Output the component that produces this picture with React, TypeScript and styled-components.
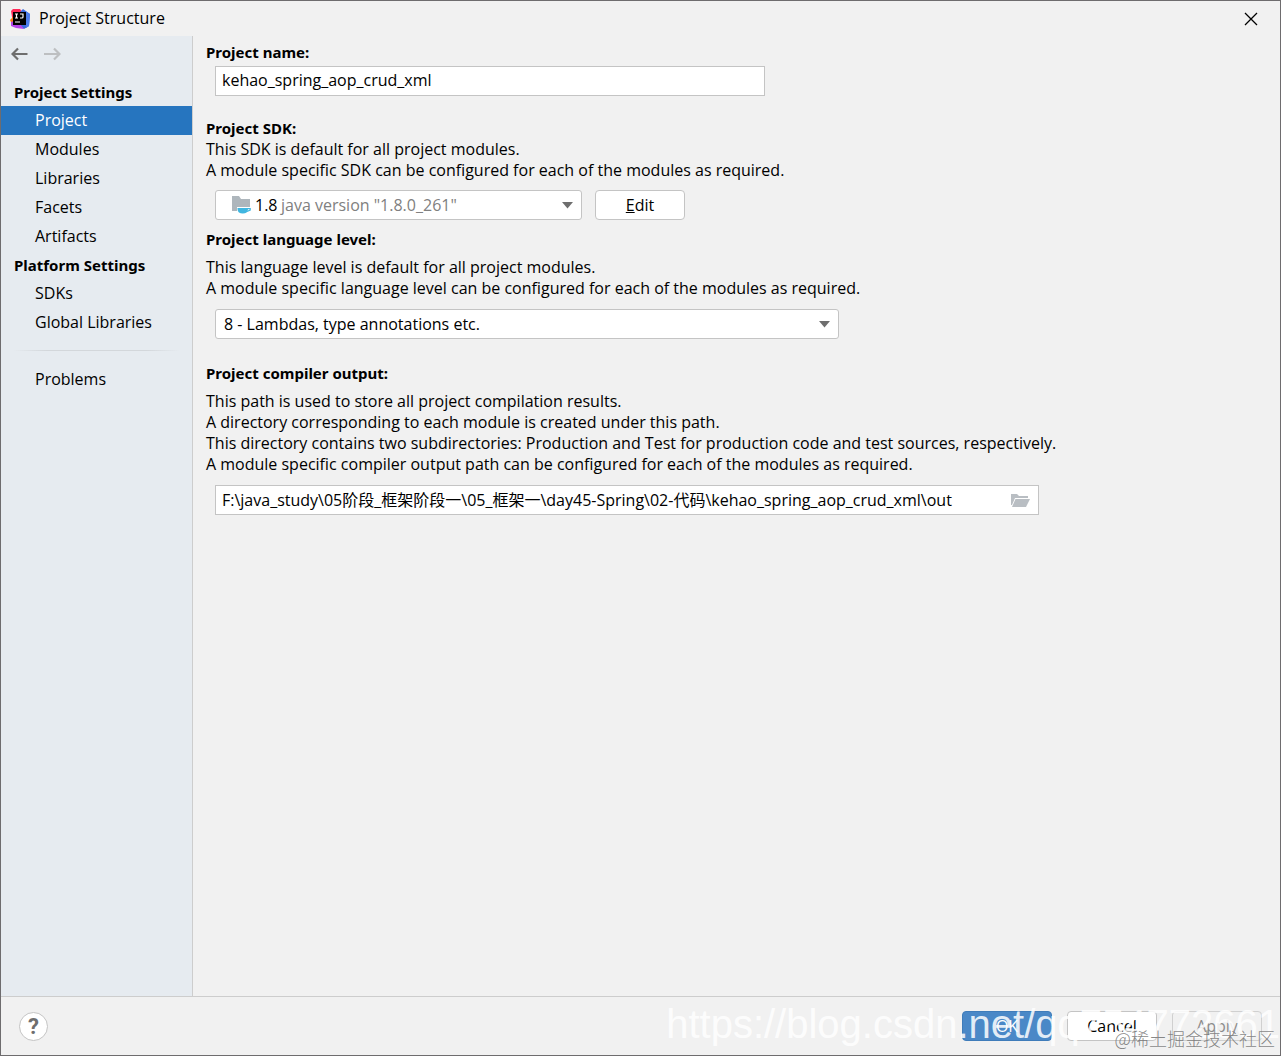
import React from "react";
import styled, { createGlobalStyle } from "styled-components";

const Global = createGlobalStyle`
  *, *::before, *::after { box-sizing: border-box; }
  body { margin: 0; background: #f1f1f1; }
  body, button, input, select {
    font-family: "Open Sans", "Noto Sans CJK SC", sans-serif;
    font-size: 16px;
    line-height: 21px;
    color: #000;
  }
  p, h1, h2, ul { margin: 0; padding: 0; font-size: 16px; }
`;

const Window = styled.div`
  position: relative;
  display: flex;
  flex-direction: column;
  min-height: 100vh;
  border: 1px solid #6e6c6e;
  background: #f1f1f1;
  overflow: hidden;
`;

const TitleBar = styled.header`
  display: flex;
  align-items: center;
  gap: 8px;
  height: 35px;
  padding: 0 21px 0 8px;
`;

const Title = styled.h1`
  flex: 1;
  font-weight: 400;
`;

const IconButton = styled.button`
  display: flex;
  padding: 0;
  border: 0;
  background: none;
`;

const Body = styled.div`
  display: flex;
  flex: 1;
`;

const Sidebar = styled.aside`
  flex: none;
  width: 192px;
  border-right: 1px solid #cdcdcd;
  background: #e6ebf0;
`;

const History = styled.div`
  display: flex;
  gap: 16px;
  padding: 9px 10px 15px;
`;

const GroupTitle = styled.h2`
  padding: 4px 13px 3px;
  font-family: "Noto Sans", sans-serif;
  font-size: 15px;
  font-weight: 700;
`;

const NavList = styled.ul`
  list-style: none;
`;

const NavLink = styled.a<{ $active?: boolean }>`
  display: block;
  padding: 4px 34px;
  text-decoration: none;
  color: ${(p) => (p.$active ? "#fff" : "#000")};
  background: ${(p) => (p.$active ? "#2675bf" : "transparent")};
`;

const Divider = styled.hr`
  height: 1px;
  margin: 13px 12px 14px;
  border: 0;
  background: linear-gradient(90deg, transparent, #d3d7db 20%, #d3d7db 80%, transparent);
`;

const Content = styled.main`
  flex: 1;
  min-width: 0;
  padding: 6px 13px;
`;

const Section = styled.section<{ $after: number }>`
  margin-bottom: ${(p) => p.$after}px;
`;

const Caption = styled.label<{ $gap?: number }>`
  display: block;
  margin-bottom: ${(p) => p.$gap ?? 0}px;
  font-family: "Noto Sans", sans-serif;
  font-size: 15px;
  font-weight: 700;
`;

const Row = styled.div<{ $top: number }>`
  display: flex;
  gap: 13px;
  margin: ${(p) => p.$top}px 0 0 9px;
`;

const TextBox = styled.input<{ $width: number }>`
  width: ${(p) => p.$width}px;
  height: 30px;
  padding: 0 6px 2px;
  border: 1px solid #c4c4c4;
  background: #fff;
`;

const Field = styled.div`
  display: grid;
  align-items: center;
  & > * { grid-area: 1 / 1; }
`;

const Picker = styled.select<{ $width: number; $indent: number }>`
  appearance: none;
  width: ${(p) => p.$width}px;
  height: 30px;
  padding: 0 30px 0 ${(p) => p.$indent}px;
  border: 1px solid #c4c4c4;
  border-radius: 3px;
  background: #fff;
`;

const Lead = styled.span`
  display: flex;
  align-items: center;
  padding-left: 16px;
  pointer-events: none;
`;

const Version = styled.span`
  padding-left: 66px;
  color: #808080;
  pointer-events: none;
`;

const Trail = styled.span`
  display: flex;
  justify-self: end;
  padding-right: 9px;
  pointer-events: none;
`;

const Button = styled.button<{ $kind?: "primary" | "disabled" }>`
  width: 90px;
  height: 30px;
  padding: 0;
  border: 1px solid ${(p) => (p.$kind === "primary" ? "#3f7cba" : p.$kind ? "#d0d0d0" : "#c4c4c4")};
  border-radius: 4px;
  color: ${(p) => (p.$kind === "primary" ? "#fff" : p.$kind ? "#8c8c8c" : "#000")};
  background: ${(p) => (p.$kind === "primary" ? "#4a88c7" : p.$kind ? "#f1f1f1" : "#fff")};
`;

const Footer = styled.footer`
  display: flex;
  align-items: center;
  gap: 15px;
  height: 59px;
  padding: 0 18px;
  border-top: 1px solid #cdcdcd;
`;

const Help = styled.button`
  width: 29px;
  height: 29px;
  margin-right: auto;
  padding: 0;
  border: 1px solid #c4c4c4;
  border-radius: 50%;
  background: #fff;
  color: #6e6e6e;
  font-family: Roboto, sans-serif;
  font-size: 22px;
  font-weight: 700;
`;

const UrlMark = styled.div`
  position: absolute;
  right: 0;
  bottom: 8px;
  font: 40px/46px "Liberation Sans", sans-serif;
  color: rgba(255, 255, 255, 0.85);
  white-space: nowrap;
  pointer-events: none;
`;

const CommunityMark = styled.div`
  position: absolute;
  right: 5px;
  bottom: 5px;
  font: 300 18px/24px "Noto Sans CJK SC", sans-serif;
  color: rgba(120, 120, 120, 0.9);
  white-space: nowrap;
  pointer-events: none;
`;

const Logo = () => (
  <svg width="22" height="22" viewBox="0 0 22 22" aria-hidden="true">
    <path d="M3 6 6 9 5 17 3 16 1 12 3 10z" fill="#f97a12" />
    <path d="M2 3 4 1h7l3 4-5 5-6-1z" fill="#fe2857" />
    <path d="M11 4 14 1l7 5-1 12-5 3-6-4z" fill="#3b6bdc" />
    <path d="M17 3.500 21 6l-1 12-3 2z" fill="#4d7dea" />
    <path d="M2 14l6-2 7 9-8-1-5-2z" fill="#b345e8" />
    <path d="M4 4h13v13H4z" fill="#000" />
    <path d="M6 6h3M7.500 6v4M6 10h3M11 6h3v3q0 1-1 1h-2M6 14h5" fill="none" stroke="#fff" strokeWidth="1.2" />
  </svg>
);

const Arrow = ({ color, flip }: { color: string; flip?: boolean }) => (
  <svg width="17" height="18" viewBox="0 0 17 18" aria-hidden="true">
    <path
      d={flip ? "M0 9h16M10 3.500 15.500 9 10 14.500" : "M16.500 9H1.500M7 3.500 1.500 9 7 14.500"}
      fill="none" stroke={color} strokeWidth="2.2"
    />
  </svg>
);

const Caret = () => (
  <svg width="11" height="7" viewBox="0 0 11 7" aria-hidden="true">
    <path d="M0 0h11L5.500 6.500z" fill="#6e6e6e" />
  </svg>
);

const SdkIcon = () => (
  <svg width="20" height="18" viewBox="0 0 20 18" aria-hidden="true">
    <path d="M1 0h7l2 3h9v8H6v4H1z" fill="#aeb6bc" />
    <path d="M6.500 12H17v1c0 3-2 4.500-5.200 4.500S6.500 16 6.500 13z" fill="#40b6e0" />
    <path d="M16 12.600h3.200v1.400L16 15.500" fill="none" stroke="#40b6e0" strokeWidth="1.200" />
  </svg>
);

const FolderIcon = () => (
  <svg width="19" height="15" viewBox="0 0 19 15" aria-hidden="true">
    <path d="M0 1h6l2 2h9v2H4L1 12H0z" fill="#b9bec3" />
    <path d="M4.500 6H19l-4 8H1z" fill="#b9bec3" />
  </svg>
);

const Nav = ({ items, active }: { items: string[]; active?: string }) => (
  <NavList>
    {items.map((name) => (
      <li key={name}>
        <NavLink href="#" $active={name === active}>{name}</NavLink>
      </li>
    ))}
  </NavList>
);

export default function App() {
  return (
    <>
      <Global />
      <Window>
        <TitleBar>
          <Logo />
          <Title>Project Structure</Title>
          <IconButton aria-label="Close">
            <svg width="16" height="16" viewBox="0 0 16 16" aria-hidden="true">
              <path d="M2 2l12 12M14 2 2 14" fill="none" stroke="#000" strokeWidth="1.300" />
            </svg>
          </IconButton>
        </TitleBar>
        <Body>
          <Sidebar>
            <History>
              <IconButton aria-label="Back"><Arrow color="#6e6e6e" /></IconButton>
              <IconButton aria-label="Forward" disabled><Arrow color="#bdbfc1" flip /></IconButton>
            </History>
            <GroupTitle>Project Settings</GroupTitle>
            <Nav items={["Project", "Modules", "Libraries", "Facets", "Artifacts"]} active="Project" />
            <GroupTitle>Platform Settings</GroupTitle>
            <Nav items={["SDKs", "Global Libraries"]} />
            <Divider />
            <Nav items={["Problems"]} />
          </Sidebar>
          <Content>
            <Section $after={22}>
              <Caption htmlFor="name" $gap={3}>Project name:</Caption>
              <Row $top={0}>
                <TextBox id="name" $width={550} defaultValue="kehao_spring_aop_crud_xml" />
              </Row>
            </Section>
            <Section $after={9}>
              <Caption htmlFor="sdk">Project SDK:</Caption>
              <p>This SDK is default for all project modules.</p>
              <p>A module specific SDK can be configured for each of the modules as required.</p>
              <Row $top={9}>
                <Field>
                  <Picker id="sdk" $width={367} $indent={39}><option>1.8</option></Picker>
                  <Lead><SdkIcon /></Lead>
                  <Version>java version "1.8.0_261"</Version>
                  <Trail><Caret /></Trail>
                </Field>
                <Button><u>E</u>dit</Button>
              </Row>
            </Section>
            <Section $after={24}>
              <Caption htmlFor="level" $gap={7}>Project language level:</Caption>
              <p>This language level is default for all project modules.</p>
              <p>A module specific language level can be configured for each of the modules as required.</p>
              <Row $top={10}>
                <Field>
                  <Picker id="level" $width={624} $indent={8}>
                    <option>8 - Lambdas, type annotations etc.</option>
                  </Picker>
                  <Trail><Caret /></Trail>
                </Field>
              </Row>
            </Section>
            <Section $after={0}>
              <Caption htmlFor="output" $gap={7}>Project compiler output:</Caption>
              <p>This path is used to store all project compilation results.</p>
              <p>A directory corresponding to each module is created under this path.</p>
              <p>This directory contains two subdirectories: Production and Test for production code and test sources, respectively.</p>
              <p>A module specific compiler output path can be configured for each of the modules as required.</p>
              <Row $top={10}>
                <Field>
                  <TextBox id="output" $width={824} defaultValue="F:\java_study\05阶段_框架阶段一\05_框架一\day45-Spring\02-代码\kehao_spring_aop_crud_xml\out" />
                  <Trail><FolderIcon /></Trail>
                </Field>
              </Row>
            </Section>
          </Content>
        </Body>
        <Footer>
          <Help aria-label="Help">?</Help>
          <Button $kind="primary">OK</Button>
          <Button>Cancel</Button>
          <Button $kind="disabled" disabled>Apply</Button>
        </Footer>
        <UrlMark>https://blog.csdn.net/qq754772661</UrlMark>
        <CommunityMark>@稀土掘金技术社区</CommunityMark>
      </Window>
    </>
  );
}
